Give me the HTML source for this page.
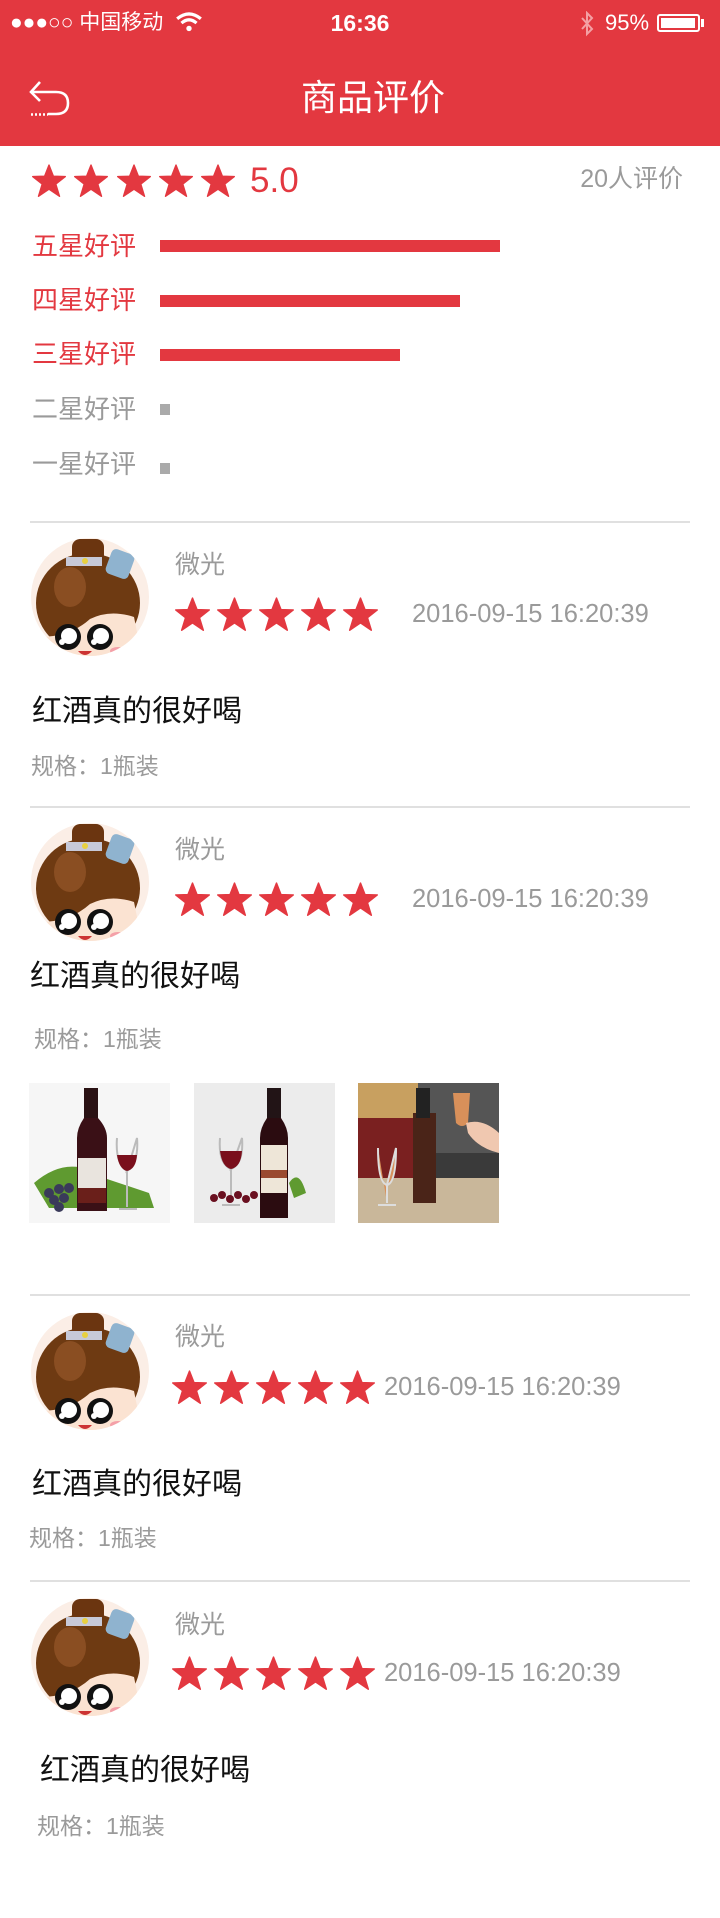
<!DOCTYPE html>
<html><head><meta charset="utf-8">
<style>
*{margin:0;padding:0;box-sizing:border-box}
body{width:720px;height:1918px;position:relative;background:#fff;font-family:"Liberation Sans","Noto Sans CJK SC",sans-serif;overflow:hidden}
.a{position:absolute;white-space:nowrap}
.red{color:#e33840}
.gray{color:#9a9a9a}
.bar{position:absolute;height:12px;background:#e33840;left:160px}
.sq{position:absolute;width:10px;height:11px;background:#aaa;left:160px}
.hr{position:absolute;left:30px;width:660px;height:2px;background:#e0e0e0}
.st{position:absolute}
.ct{font-size:30px;line-height:34px;color:#111}
.dt{font-size:25.5px;line-height:28px}
</style></head><body>
<svg width="0" height="0" style="position:absolute">
<defs>
<polygon id="star" points="50,3 63,36 98,37 70,59 81,95 50,74 19,95 30,59 2,37 37,36" fill="#e33840" stroke="#e33840" stroke-width="4" stroke-linejoin="round"/>
<clipPath id="cp"><circle cx="60" cy="60" r="59"/></clipPath>
<g id="av">
<g clip-path="url(#cp)">
<rect x="0" y="0" width="120" height="120" fill="#fbeee6"/>
<ellipse cx="58" cy="66" rx="52" ry="50" fill="#6e3a12"/>
<ellipse cx="40" cy="50" rx="16" ry="20" fill="#8a4e22"/>
<rect x="42" y="2" width="32" height="24" rx="8" fill="#6b3510"/>
<rect x="36" y="20" width="36" height="9" fill="#c7c9d8"/>
<circle cx="55" cy="24" r="3" fill="#e8d040"/>
<rect x="78" y="14" width="24" height="26" rx="5" fill="#8fb3cf" transform="rotate(20 90 27)"/>
<path d="M60 82 Q80 72 104 80 L112 120 L10 120 L10 100 Q40 100 60 82Z" fill="#fbe3d2"/>
<circle cx="38" cy="100" r="13" fill="#111"/><circle cx="70" cy="100" r="13" fill="#111"/>
<circle cx="39" cy="99" r="8" fill="#fff"/><circle cx="71" cy="99" r="8" fill="#fff"/>
<circle cx="32" cy="105" r="3" fill="#fff"/><circle cx="64" cy="105" r="3" fill="#fff"/>
<ellipse cx="24" cy="114" rx="8" ry="4" fill="#f4a0a8"/><ellipse cx="88" cy="114" rx="8" ry="4" fill="#f4a0a8"/>
<path d="M48 114 Q55 122 62 114Z" fill="#c33"/>
</g>
</g>
</defs></svg>

<!-- header -->
<div class="a" style="left:0;top:0;width:720px;height:146px;background:#e33840"></div>
<div class="a" style="left:10px;top:10px;color:#fff;font-size:21px;line-height:26px">●●●○○ 中国移动</div>
<svg class="a" style="left:175px;top:11px" width="28" height="22" viewBox="0 0 26 20"><path d="M2 7 Q13 -2 24 7" stroke="#fff" stroke-width="3" fill="none"/><path d="M6 11 Q13 5 20 11" stroke="#fff" stroke-width="3" fill="none"/><circle cx="13" cy="16" r="2.5" fill="#fff"/></svg>
<div class="a" style="left:0;width:720px;top:9px;text-align:center;color:#fff;font-size:23px;font-weight:bold;line-height:28px">16:36</div>
<svg class="a" style="left:579px;top:11px" width="16" height="26" viewBox="0 0 16 26"><path d="M3 7 L13 18 L8 23 L8 2 L13 7 L3 18" stroke="#f4a0a4" stroke-width="2" fill="none"/></svg>
<div class="a" style="left:605px;top:10px;color:#fff;font-size:22px;line-height:26px">95%</div>
<div class="a" style="left:657px;top:14px;width:43px;height:18px;border:2px solid #fff;border-radius:3px"><div style="margin:2px;height:10px;width:34px;background:#fff"></div></div>
<div class="a" style="left:701px;top:19px;width:3px;height:8px;background:#fff"></div>
<svg class="a" style="left:28px;top:78px" width="46" height="40" viewBox="0 0 46 40"><path d="M12 4 L3 14 L12 23" stroke="#fff" stroke-width="2.6" fill="none"/><path d="M3 14 H28 Q40 14 40 25 Q40 36 28 36 H20" stroke="#fff" stroke-width="2.6" fill="none"/><path d="M3 36.5 H20" stroke="#fff" stroke-width="2.6" stroke-dasharray="2 2"/></svg>
<div class="a" style="left:13px;width:720px;top:77px;text-align:center;color:#fff;font-size:36px;line-height:42px">商品评价</div>

<!-- summary -->
<svg class="st" style="left:32px;top:164px" width="210" height="34" viewBox="0 0 210 34">
<use href="#star" transform="translate(0,0) scale(0.34)"/><use href="#star" transform="translate(42,0) scale(0.34)"/><use href="#star" transform="translate(85,0) scale(0.34)"/><use href="#star" transform="translate(127,0) scale(0.34)"/><use href="#star" transform="translate(169,0) scale(0.34)"/></svg>
<div class="a red" style="left:250px;top:162px;font-size:35px;line-height:38px">5.0</div>
<div class="a gray" style="right:37px;top:165px;font-size:25px;line-height:28px">20人评价</div>

<div class="a red" style="left:32px;top:231px;font-size:26px;line-height:30px">五星好评</div>
<div class="bar" style="top:240px;width:340px"></div>
<div class="a red" style="left:32px;top:285px;font-size:26px;line-height:30px">四星好评</div>
<div class="bar" style="top:295px;width:300px"></div>
<div class="a red" style="left:32px;top:339px;font-size:26px;line-height:30px">三星好评</div>
<div class="bar" style="top:349px;width:240px"></div>
<div class="a gray" style="left:32px;top:394px;font-size:26px;line-height:30px">二星好评</div>
<div class="sq" style="top:404px"></div>
<div class="a gray" style="left:32px;top:449px;font-size:26px;line-height:30px">一星好评</div>
<div class="sq" style="top:463px"></div>

<div class="hr" style="top:521px"></div>

<!-- review 1 -->
<svg class="a" style="left:30px;top:537px" width="120" height="120" viewBox="0 0 120 120"><use href="#av"/></svg>
<div class="a gray" style="left:175px;top:551px;font-size:25px;line-height:28px">微光</div>
<svg class="st" style="left:175px;top:597px" width="210" height="36" viewBox="0 0 210 36"><use href="#star" transform="scale(0.35)"/><use href="#star" transform="translate(42,0) scale(0.35)"/><use href="#star" transform="translate(84,0) scale(0.35)"/><use href="#star" transform="translate(126,0) scale(0.35)"/><use href="#star" transform="translate(168,0) scale(0.35)"/></svg>
<div class="a gray dt" style="left:412px;top:600px">2016-09-15 16:20:39</div>
<div class="a ct" style="left:32px;top:695px">红酒真的很好喝</div>
<div class="a gray" style="left:31px;top:753px;font-size:23px;line-height:27px">规格：1瓶装</div>
<div class="hr" style="top:806px"></div>

<!-- review 2 -->
<svg class="a" style="left:30px;top:822px" width="120" height="120" viewBox="0 0 120 120"><use href="#av"/></svg>
<div class="a gray" style="left:175px;top:836px;font-size:25px;line-height:28px">微光</div>
<svg class="st" style="left:175px;top:882px" width="210" height="36" viewBox="0 0 210 36"><use href="#star" transform="scale(0.35)"/><use href="#star" transform="translate(42,0) scale(0.35)"/><use href="#star" transform="translate(84,0) scale(0.35)"/><use href="#star" transform="translate(126,0) scale(0.35)"/><use href="#star" transform="translate(168,0) scale(0.35)"/></svg>
<div class="a gray dt" style="left:412px;top:885px">2016-09-15 16:20:39</div>
<div class="a ct" style="left:30px;top:960px">红酒真的很好喝</div>
<div class="a gray" style="left:34px;top:1026px;font-size:23px;line-height:27px">规格：1瓶装</div>

<svg class="a" style="left:29px;top:1083px" width="141" height="140" viewBox="0 0 141 140"><rect width="141" height="140" fill="#f6f6f6"/><path d="M5 100 Q40 70 75 95 L120 110 L125 125 L20 125Z" fill="#5f9a30"/><rect x="55" y="5" width="14" height="30" fill="#2a1214"/><path d="M55 35 Q48 45 48 55 L48 128 L78 128 L78 55 Q78 45 69 35Z" fill="#3a1016"/><rect x="49" y="75" width="28" height="30" fill="#e9e4de"/><rect x="49" y="105" width="28" height="15" fill="#6a1f1a"/><path d="M88 55 Q86 80 98 88 L98 124 M90 126 H108 M98 88 Q110 80 108 55Z" stroke="#bbb" stroke-width="2" fill="none"/><path d="M88 72 Q90 86 98 88 Q107 86 108 72Z" fill="#7a0f1c"/><g fill="#3a3a5a"><circle cx="20" cy="110" r="5"/><circle cx="30" cy="106" r="5"/><circle cx="25" cy="117" r="5"/><circle cx="35" cy="115" r="5"/><circle cx="40" cy="105" r="5"/><circle cx="30" cy="124" r="5"/></g></svg>
<svg class="a" style="left:194px;top:1083px" width="141" height="140" viewBox="0 0 141 140"><rect width="141" height="140" fill="#ececec"/><path d="M95 100 Q105 85 112 110 L100 115Z" fill="#5f9a30"/><rect x="73" y="5" width="14" height="30" fill="#221416"/><path d="M73 35 Q66 45 66 55 L66 135 L94 135 L94 55 Q94 45 87 35Z" fill="#2b0c10"/><rect x="67" y="62" width="26" height="48" fill="#eee6d8"/><rect x="67" y="87" width="26" height="8" fill="#9a4a30"/><path d="M26 55 Q24 80 37 86 L37 118 M28 122 H46 M37 86 Q50 80 48 55Z" stroke="#bbb" stroke-width="2" fill="none"/><path d="M26 68 Q28 84 37 86 Q47 84 48 68Z" fill="#7a0f1c"/><g fill="#6a1020"><circle cx="20" cy="115" r="4"/><circle cx="28" cy="112" r="4"/><circle cx="36" cy="116" r="4"/><circle cx="44" cy="112" r="4"/><circle cx="52" cy="116" r="4"/><circle cx="60" cy="112" r="4"/></g></svg>
<svg class="a" style="left:358px;top:1083px" width="141" height="140" viewBox="0 0 141 140"><rect width="141" height="140" fill="#3a3a3a"/><rect x="0" y="0" width="60" height="120" fill="#7a2020"/><rect x="0" y="0" width="60" height="35" fill="#c8a060"/><rect x="60" y="0" width="81" height="70" fill="#555"/><rect x="0" y="95" width="141" height="45" fill="#c9b79a"/><path d="M55 30 L55 120 L78 120 L78 30Z" fill="#4a2418"/><rect x="58" y="5" width="14" height="30" fill="#222"/><path d="M20 65 Q20 100 29 102 L29 120 M20 122 H38 M29 102 Q38 100 38 65Z" stroke="#ddd" stroke-width="2" fill="#d8905a"/><path d="M95 10 L112 10 L110 40 Q104 46 98 40Z" fill="#d8905a"/><path d="M108 40 Q125 35 141 50 L141 70 Q120 65 110 50Z" fill="#f0c8b0"/></svg>

<div class="hr" style="top:1294px"></div>

<!-- review 3 -->
<svg class="a" style="left:30px;top:1311px" width="120" height="120" viewBox="0 0 120 120"><use href="#av"/></svg>
<div class="a gray" style="left:175px;top:1323px;font-size:25px;line-height:28px">微光</div>
<svg class="st" style="left:172px;top:1370px" width="210" height="36" viewBox="0 0 210 36"><use href="#star" transform="scale(0.35)"/><use href="#star" transform="translate(42,0) scale(0.35)"/><use href="#star" transform="translate(84,0) scale(0.35)"/><use href="#star" transform="translate(126,0) scale(0.35)"/><use href="#star" transform="translate(168,0) scale(0.35)"/></svg>
<div class="a gray dt" style="left:384px;top:1373px">2016-09-15 16:20:39</div>
<div class="a ct" style="left:32px;top:1468px">红酒真的很好喝</div>
<div class="a gray" style="left:29px;top:1525px;font-size:23px;line-height:27px">规格：1瓶装</div>
<div class="hr" style="top:1580px"></div>

<!-- review 4 -->
<svg class="a" style="left:30px;top:1597px" width="120" height="120" viewBox="0 0 120 120"><use href="#av"/></svg>
<div class="a gray" style="left:175px;top:1611px;font-size:25px;line-height:28px">微光</div>
<svg class="st" style="left:172px;top:1656px" width="210" height="36" viewBox="0 0 210 36"><use href="#star" transform="scale(0.35)"/><use href="#star" transform="translate(42,0) scale(0.35)"/><use href="#star" transform="translate(84,0) scale(0.35)"/><use href="#star" transform="translate(126,0) scale(0.35)"/><use href="#star" transform="translate(168,0) scale(0.35)"/></svg>
<div class="a gray dt" style="left:384px;top:1659px">2016-09-15 16:20:39</div>
<div class="a ct" style="left:40px;top:1754px">红酒真的很好喝</div>
<div class="a gray" style="left:37px;top:1813px;font-size:23px;line-height:27px">规格：1瓶装</div>
</body></html>
